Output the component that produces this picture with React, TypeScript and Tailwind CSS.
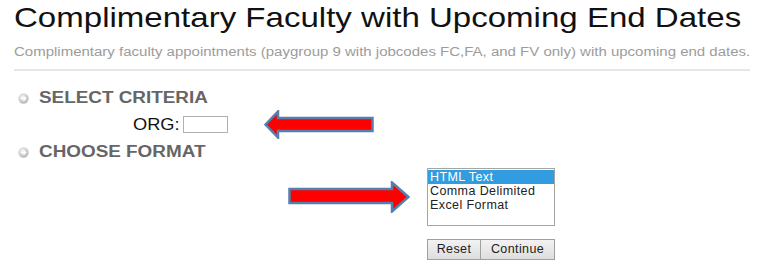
import { useState } from 'react';

function BulletIcon() {
  return (
    <svg width="11" height="11" viewBox="0 0 12 12" className="shrink-0">
      <defs>
        <radialGradient id="bg" cx="40%" cy="35%" r="70%">
          <stop offset="0%" stopColor="#f4f4f4" />
          <stop offset="100%" stopColor="#b5b5b5" />
        </radialGradient>
      </defs>
      <circle cx="6" cy="6" r="5.6" fill="url(#bg)" />
      <path d="M3 6h5M6 3.8L8.3 6 6 8.2" stroke="#fff" strokeWidth="1.4" fill="none" />
    </svg>
  );
}

function Arrow({ dir, w, h, head, s1, s2 }: { dir: 'left' | 'right'; w: number; h: number; head: number; s1: number; s2: number }) {
  const pts =
    dir === 'left'
      ? `1.5,${h / 2} ${head},1.5 ${head},${s1} ${w - 1.5},${s1} ${w - 1.5},${s2} ${head},${s2} ${head},${h - 1.5}`
      : `${w - 1.5},${h / 2} ${w - head},1.5 ${w - head},${s1} 1.5,${s1} 1.5,${s2} ${w - head},${s2} ${w - head},${h - 1.5}`;
  return (
    <svg width={w} height={h} viewBox={`0 0 ${w} ${h}`} className="block">
      <polygon points={pts} fill="#ff0000" stroke="#5580ad" strokeWidth="2.5" strokeLinejoin="miter" />
    </svg>
  );
}

const OPTIONS = [
  ['html', 'HTML Text'],
  ['csv', 'Comma Delimited'],
  ['xls', 'Excel Format'],
];

export default function App() {
  const [format, setFormat] = useState('html');
  return (
    <div className="w-[768px] h-[272px] bg-white overflow-hidden pl-[14px] pt-[2px] font-['Liberation_Sans',Arial,sans-serif]">
      {/* the source screenshot is stretched sideways, so the text is widened to match */}
      <h1 className="text-[28px] leading-[32px] text-[#111] whitespace-nowrap origin-left scale-x-[1.18]">
        Complimentary Faculty with Upcoming End Dates
      </h1>
      <p className="mt-[11px] text-[12.5px] leading-[15px] text-[#9c9c9c] whitespace-nowrap origin-left scale-x-[1.2]">
        Complimentary faculty appointments (paygroup 9 with jobcodes FC,FA, and FV only) with upcoming end dates.
      </p>
      <div className="mt-[9px] w-[736px] h-[2px] bg-[#e6e6e6]" />

      <div className="mt-[18px] flex items-center h-[18px] pl-[4px] gap-[10px]">
        <BulletIcon />
        <span className="text-[16px] leading-[18px] font-bold text-[#666] origin-left scale-x-[1.18]">SELECT CRITERIA</span>
      </div>

      <div className="mt-[3px] flex items-center h-[29px]">
        <span className="ml-[119px] w-[50px] text-[16px] leading-[18px] text-[#111] origin-left scale-x-[1.14]">ORG:</span>
        <input className="w-[45px] h-[17px] border border-[#b0b0b0] outline-none" />
        <div className="ml-[36px]">
          <Arrow dir="left" w={110} h={29} head={14} s1={8} s2={21} />
        </div>
      </div>

      <div className="mt-[4px] flex items-center h-[18px] pl-[4px] gap-[10px]">
        <BulletIcon />
        <span className="text-[16px] leading-[18px] font-bold text-[#666] origin-left scale-x-[1.18]">CHOOSE FORMAT</span>
      </div>

      <div className="mt-[7px] flex">
        <div className="ml-[274px] mt-[13px]">
          <Arrow dir="right" w={122} h={32} head={18} s1={8} s2={22} />
        </div>
        <div className="ml-[17px] flex flex-col">
          <div className="w-[128px] h-[58px] border border-[#a5a5a5] pt-px text-[12.5px] leading-[14px] text-[#222] tracking-[0.4px]">
            {OPTIONS.map(([k, label]) => (
              <div
                key={k}
                onClick={() => setFormat(k)}
                className={`pl-[2px] ${format === k ? 'bg-[#319de0] text-white' : ''}`}
              >
                {label}
              </div>
            ))}
          </div>
          <div className="mt-[13px] flex">
            <button className="h-[21px] w-[54px] border border-[#a0a0a0] bg-gradient-to-b from-[#f2f2f2] to-[#dedede] text-[12.5px] leading-[19px] text-[#222] tracking-[0.4px]">
              Reset
            </button>
            <button className="h-[21px] w-[74px] border border-[#a0a0a0] border-l-0 bg-gradient-to-b from-[#f2f2f2] to-[#dedede] text-[12.5px] leading-[19px] text-[#222] tracking-[0.4px]">
              Continue
            </button>
          </div>
        </div>
      </div>
    </div>
  );
}
